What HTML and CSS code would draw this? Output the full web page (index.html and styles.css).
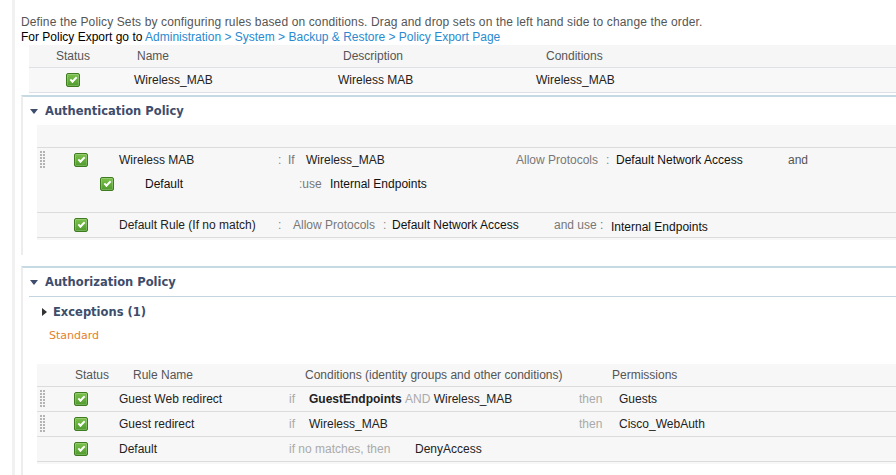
FILE: index.html
```html
<!DOCTYPE html>
<html>
<head>
<meta charset="utf-8">
<link rel="stylesheet" href="styles.css">
</head>
<body>
<div class="page">
  <div class="intro">
    <div class="intro-l1">Define the Policy Sets by configuring rules based on conditions. Drag and drop sets on the left hand side to change the order.</div>
    <div class="intro-l2">For Policy Export go to <a class="link">Administration &gt; System &gt; Backup &amp; Restore &gt; Policy Export Page</a></div>
  </div>

  <div class="sets">
    <div class="sh sh-status">Status</div>
    <div class="sh sh-name">Name</div>
    <div class="sh sh-desc">Description</div>
    <div class="sh sh-cond">Conditions</div>
    <div class="sc sc-status"><span class="chk"></span></div>
    <div class="sc sc-text">Wireless_MAB</div>
    <div class="sc sc-text">Wireless MAB</div>
    <div class="sc sc-text">Wireless_MAB</div>
  </div>

  <section class="panel panel-authn">
    <div class="panel-head"><span class="tri-down"></span>Authentication Policy</div>
    <div class="rules">
      <div class="rules-head"></div>
      <div class="rule rule-tall">
        <div class="line">
          <span class="c c-pre"><span class="grip"></span></span>
          <span class="c c-chk"><span class="chk"></span></span>
          <span class="c au-name">Wireless MAB</span>
          <span class="c au-colon sep">:</span>
          <span class="c au-if lbl">If</span>
          <span class="c au-cond">Wireless_MAB</span>
          <span class="c au-proto lbl">Allow Protocols</span>
          <span class="c au-colon2 sep">:</span>
          <span class="c au-net val">Default Network Access</span>
          <span class="c lbl-dark">and</span>
        </div>
        <div class="line">
          <span class="c au-sub-pre"></span>
          <span class="c c-chk"><span class="chk"></span></span>
          <span class="c au-subname val">Default</span>
          <span class="c au-use"><span class="sep">:</span><span class="lbl">use</span></span>
          <span class="c val">Internal Endpoints</span>
        </div>
      </div>
      <div class="rule">
        <div class="line">
          <span class="c c-pre"></span>
          <span class="c c-chk"><span class="chk"></span></span>
          <span class="c au-name">Default Rule (If no match)</span>
          <span class="c au-dcolon sep">:</span>
          <span class="c au-proto lbl">Allow Protocols</span>
          <span class="c au-dcolon2 sep">:</span>
          <span class="c au-dnet val">Default Network Access</span>
          <span class="c au-anduse lbl">and use :</span>
          <span class="c val drop">Internal Endpoints</span>
        </div>
      </div>
    </div>
  </section>

  <section class="panel panel-authz">
    <div class="panel-head ruled"><span class="tri-down"></span>Authorization Policy</div>
    <div class="exc"><span class="tri-right"></span>Exceptions (1)</div>
    <div class="std">Standard</div>
    <div class="rules">
      <div class="rule">
        <div class="line line-head">
          <span class="c az-hstatus">Status</span>
          <span class="c az-hrule">Rule Name</span>
          <span class="c az-hcond">Conditions (identity groups and other conditions)</span>
          <span class="c">Permissions</span>
        </div>
      </div>
      <div class="rule">
        <div class="line">
          <span class="c c-pre"><span class="grip"></span></span>
          <span class="c c-chk"><span class="chk"></span></span>
          <span class="c az-name">Guest Web redirect</span>
          <span class="c az-if dim">if</span>
          <span class="c az-cond"><b class="strong">GuestEndpoints</b>&nbsp;<span class="dim">AND</span>&nbsp;Wireless_MAB</span>
          <span class="c az-then dim">then</span>
          <span class="c">Guests</span>
        </div>
      </div>
      <div class="rule">
        <div class="line">
          <span class="c c-pre"><span class="grip"></span></span>
          <span class="c c-chk"><span class="chk"></span></span>
          <span class="c az-name">Guest redirect</span>
          <span class="c az-if dim">if</span>
          <span class="c az-cond">Wireless_MAB</span>
          <span class="c az-then dim">then</span>
          <span class="c">Cisco_WebAuth</span>
        </div>
      </div>
      <div class="rule">
        <div class="line">
          <span class="c c-pre"></span>
          <span class="c c-chk"><span class="chk"></span></span>
          <span class="c az-name">Default</span>
          <span class="c az-nomatch dim">if no matches, then</span>
          <span class="c">DenyAccess</span>
        </div>
      </div>
    </div>
  </section>
</div>
</body>
</html>
```

FILE: styles.css
```css
html, body {
  margin: 0;
  overflow: hidden;
}
body {
  font-family: "Liberation Sans", Arial, sans-serif;
  font-size: 12px;
  color: #222;
  background: #fff;
}
.page {
  margin-left: 12px;
  border-left: 3px solid #f1f1f1;
  padding: 15px 0 0 6px;
  min-height: 460px;
}
.intro {
  line-height: 15px;
  color: #555;
}
.intro-l1 { letter-spacing: 0.13px; }
.intro-l2 { color: #000; }
.link { color: #2a8ad0; text-decoration: none; }

/* policy sets table */
.sets {
  margin: 0 0 2px 8px;
  display: grid;
  grid-template-columns: 88px 204px 198px 1fr;
}
.sets > div {
  display: flex;
  align-items: center;
  border-bottom: 1px solid #dde1e5;
  white-space: nowrap;
}
.sh { height: 22px; background: #f6f6f6; color: #555; }
.sc { height: 24px; background: #f8f8f8; }
.sh-status, .sc-status { justify-content: center; }
.sh-name { padding-left: 20px; }
.sh-desc { padding-left: 22px; }
.sh-cond { padding-left: 27px; }
.sc-text { padding-left: 17px; }

/* panels */
.panel {
  border-top: 2px solid #c6dae4;
  border-left: 2px solid #ededed;
  padding-bottom: 15px;
}
.panel-authz {
  margin-top: 11px;
  padding-bottom: 20px;
}
.panel-head {
  margin-left: 6px;
  padding-left: 1px;
  height: 28px;
  display: flex;
  align-items: center;
  font-family: "DejaVu Sans", Verdana, sans-serif;
  font-weight: bold;
  font-size: 11.5px;
  color: #3d4d6b;
}
.panel-head.ruled { border-bottom: 1px solid #c4d5df; }
.tri-down {
  width: 0;
  height: 0;
  border-left: 4px solid transparent;
  border-right: 4px solid transparent;
  border-top: 5px solid #3d4d6b;
  margin-right: 7px;
}
.tri-right {
  width: 0;
  height: 0;
  border-top: 4px solid transparent;
  border-bottom: 4px solid transparent;
  border-left: 5px solid #333;
  margin-right: 6px;
}
.exc {
  margin-top: 3px;
  height: 24px;
  padding-left: 19px;
  display: flex;
  align-items: center;
  font-family: "DejaVu Sans", Verdana, sans-serif;
  font-weight: bold;
  font-size: 11.5px;
  color: #3d4d6b;
}
.std {
  height: 24px;
  line-height: 24px;
  padding-left: 26px;
  font-family: "DejaVu Sans", Verdana, sans-serif;
  font-size: 11px;
  color: #e5811f;
}
.panel-authz .rules { margin-top: 16px; }

/* rule tables */
.rules {
  margin-left: 14px;
  background: #f7f7f7;
  padding-bottom: 2px;
}
.rules-head {
  height: 22px;
  border-bottom: 1px solid #dcdcdc;
}
.rule { border-bottom: 1px solid #dcdcdc; }
.rule-tall { padding-bottom: 16px; }
.line {
  display: flex;
  align-items: center;
  height: 24px;
  white-space: nowrap;
}
.line-head { height: 22px; color: #555; }
.c { flex: none; display: flex; align-items: center; }

.c-pre { width: 37px; }
.c-chk { width: 45px; }

.grip {
  width: 6px;
  height: 18px;
  margin-left: 3px;
  background-image: radial-gradient(circle at 1px 1px, #b4b4b4 1px, transparent 1.2px);
  background-size: 3px 3px;
}
.chk {
  position: relative;
  display: inline-block;
  width: 14px;
  height: 14px;
  box-sizing: border-box;
  border: 1px solid #3e7c1f;
  border-radius: 2px;
  background: linear-gradient(#7cc14d, #4f9b2d);
  box-shadow: inset 0 0 0 1px rgba(255, 255, 255, 0.2);
}
.chk::after {
  content: "";
  position: absolute;
  left: 3px;
  top: 3px;
  width: 5px;
  height: 2px;
  border-left: 2px solid #fff;
  border-bottom: 2px solid #fff;
  transform: rotate(-45deg);
}

.sep { color: #888; }
.lbl { color: #777; }
.lbl-dark { color: #555; }
.val { color: #111; }
.dim { color: #aaa; }
.strong { font-weight: bold; color: #222; }
.drop { margin-top: 3px; }

/* authentication columns */
.au-name { width: 159px; }
.au-colon { width: 10px; }
.au-if { width: 18px; }
.au-cond { width: 210px; }
.au-proto { width: 90px; }
.au-colon2 { width: 10px; }
.au-net { width: 172px; }
.au-sub-pre { width: 63px; }
.au-subname { width: 154px; }
.au-use { width: 31px; }
.au-dcolon { width: 15px; }
.au-dcolon2 { width: 9px; }
.au-dnet { width: 162px; }
.au-anduse { width: 57px; }

/* authorization columns */
.az-hstatus { padding-left: 38px; width: 58px; }
.az-hrule { width: 172px; }
.az-hcond { width: 307px; }
.az-name { width: 170px; }
.az-if { width: 20px; }
.az-cond { width: 270px; }
.az-then { width: 40px; }
.az-nomatch { width: 126px; }
```
